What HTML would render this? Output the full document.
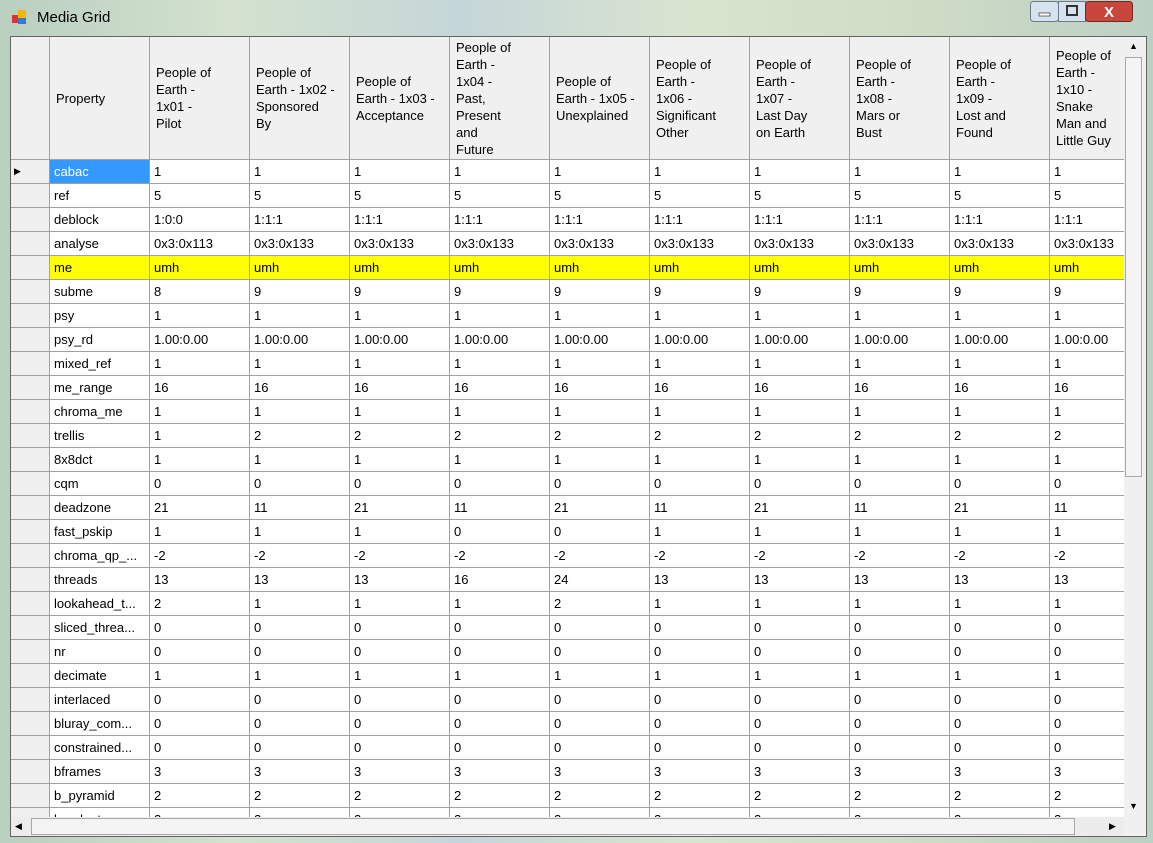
<!DOCTYPE html>
<html><head><style>
body{margin:0;width:1153px;height:843px;overflow:hidden;position:relative;font-family:"Liberation Sans",sans-serif;background:linear-gradient(90deg,#b9cfc0,#d4e2cf 20%,#c5d6d8 40%,#d9e4cf 60%,#cfdcc6 80%,#bcd0c4);}
.title{position:absolute;left:37px;top:9px;font-size:15px;color:#000;}
.icon{position:absolute;left:11px;top:9px;width:17px;height:17px;}
.btns{position:absolute;left:1030px;top:1px;width:115px;height:21px;}
.frame{position:absolute;left:10px;top:36px;width:1137px;height:801px;background:#f0f0f0;border:1px solid #646464;box-sizing:border-box;}
.wrap{position:absolute;left:11px;top:37px;width:1113px;height:780px;overflow:hidden;background:#fff;}
table{border-collapse:separate;border-spacing:0;table-layout:fixed;width:1212px;font-size:13px;}
td{border-right:1px solid #a0a0a0;border-bottom:1px solid #a0a0a0;height:24px;padding:0 0 0 4px;white-space:nowrap;overflow:hidden;box-sizing:border-box;color:#000;}
tr.h td{height:123px;background:#f0f0f0;line-height:17px;padding-left:6px;}
td.rh{background:#f0f0f0;padding:0;}
tr.y td{background:#ffff00;}
tr.y td.rh{background:#f0f0f0;}
td.sel{background:#3399ff;color:#fff;}
.vs{position:absolute;left:1124px;top:37px;width:20px;height:780px;background:#f0f0f0;}
.hs{position:absolute;left:11px;top:817px;width:1113px;height:19px;background:#ececec;}
.thumbv{position:absolute;left:1px;top:20px;width:17px;height:420px;background:#f4f4f4;border:1px solid #a8a8a8;box-sizing:border-box;}
.thumbh{position:absolute;left:20px;top:1px;width:1044px;height:17px;background:#f4f4f4;border:1px solid #a8a8a8;box-sizing:border-box;}
.arr{position:absolute;font-size:9px;color:#000;}
</style></head><body>
<svg class="icon" viewBox="0 0 17 17"><rect x="1" y="6" width="6" height="8" fill="#d33"/><rect x="7" y="1" width="8" height="8" fill="#f5b800"/><rect x="7" y="9" width="8" height="6" fill="#3a78d0"/></svg>
<div class="title">Media Grid</div>
<svg class="btns" viewBox="0 0 115 21"><rect x="0.5" y="0.5" width="28" height="20" rx="3" fill="#d6e2ee" stroke="#6b7b8c"/><rect x="9" y="12" width="11" height="3" fill="#fff" stroke="#333" stroke-width=".7"/><rect x="28.5" y="0.5" width="27" height="20" fill="#d6e2ee" stroke="#6b7b8c"/><rect x="37" y="5" width="10" height="9" fill="none" stroke="#333" stroke-width="2"/><rect x="55.5" y="0.5" width="47" height="20" rx="3" fill="#c9463d" stroke="#6b2a25"/><text x="79" y="16" font-size="15" font-weight="bold" fill="#fff" text-anchor="middle" font-family="Liberation Sans">X</text></svg>
<div class="frame"></div>
<div class="wrap"><table>
<colgroup><col style="width:39px"><col style="width:100px"><col style="width:100px"><col style="width:100px"><col style="width:100px"><col style="width:100px"><col style="width:100px"><col style="width:100px"><col style="width:100px"><col style="width:100px"><col style="width:100px"><col style="width:173px"></colgroup>
<tr class="h"><td class="rh"></td><td>Property</td><td>People of<br>Earth -<br>1x01 -<br>Pilot</td><td>People of<br>Earth - 1x02 -<br>Sponsored<br>By</td><td>People of<br>Earth - 1x03 -<br>Acceptance</td><td>People of<br>Earth -<br>1x04 -<br>Past,<br>Present<br>and<br>Future</td><td>People of<br>Earth - 1x05 -<br>Unexplained</td><td>People of<br>Earth -<br>1x06 -<br>Significant<br>Other</td><td>People of<br>Earth -<br>1x07 -<br>Last Day<br>on Earth</td><td>People of<br>Earth -<br>1x08 -<br>Mars or<br>Bust</td><td>People of<br>Earth -<br>1x09 -<br>Lost and<br>Found</td><td>People of<br>Earth -<br>1x10 -<br>Snake<br>Man and<br>Little Guy</td></tr>
<tr><td class="rh" style="font-size:9px;padding-left:3px">&#9654;</td><td class="sel">cabac</td><td>1</td><td>1</td><td>1</td><td>1</td><td>1</td><td>1</td><td>1</td><td>1</td><td>1</td><td>1</td></tr>
<tr><td class="rh"></td><td>ref</td><td>5</td><td>5</td><td>5</td><td>5</td><td>5</td><td>5</td><td>5</td><td>5</td><td>5</td><td>5</td></tr>
<tr><td class="rh"></td><td>deblock</td><td>1:0:0</td><td>1:1:1</td><td>1:1:1</td><td>1:1:1</td><td>1:1:1</td><td>1:1:1</td><td>1:1:1</td><td>1:1:1</td><td>1:1:1</td><td>1:1:1</td></tr>
<tr><td class="rh"></td><td>analyse</td><td>0x3:0x113</td><td>0x3:0x133</td><td>0x3:0x133</td><td>0x3:0x133</td><td>0x3:0x133</td><td>0x3:0x133</td><td>0x3:0x133</td><td>0x3:0x133</td><td>0x3:0x133</td><td>0x3:0x133</td></tr>
<tr class="y"><td class="rh"></td><td>me</td><td>umh</td><td>umh</td><td>umh</td><td>umh</td><td>umh</td><td>umh</td><td>umh</td><td>umh</td><td>umh</td><td>umh</td></tr>
<tr><td class="rh"></td><td>subme</td><td>8</td><td>9</td><td>9</td><td>9</td><td>9</td><td>9</td><td>9</td><td>9</td><td>9</td><td>9</td></tr>
<tr><td class="rh"></td><td>psy</td><td>1</td><td>1</td><td>1</td><td>1</td><td>1</td><td>1</td><td>1</td><td>1</td><td>1</td><td>1</td></tr>
<tr><td class="rh"></td><td>psy_rd</td><td>1.00:0.00</td><td>1.00:0.00</td><td>1.00:0.00</td><td>1.00:0.00</td><td>1.00:0.00</td><td>1.00:0.00</td><td>1.00:0.00</td><td>1.00:0.00</td><td>1.00:0.00</td><td>1.00:0.00</td></tr>
<tr><td class="rh"></td><td>mixed_ref</td><td>1</td><td>1</td><td>1</td><td>1</td><td>1</td><td>1</td><td>1</td><td>1</td><td>1</td><td>1</td></tr>
<tr><td class="rh"></td><td>me_range</td><td>16</td><td>16</td><td>16</td><td>16</td><td>16</td><td>16</td><td>16</td><td>16</td><td>16</td><td>16</td></tr>
<tr><td class="rh"></td><td>chroma_me</td><td>1</td><td>1</td><td>1</td><td>1</td><td>1</td><td>1</td><td>1</td><td>1</td><td>1</td><td>1</td></tr>
<tr><td class="rh"></td><td>trellis</td><td>1</td><td>2</td><td>2</td><td>2</td><td>2</td><td>2</td><td>2</td><td>2</td><td>2</td><td>2</td></tr>
<tr><td class="rh"></td><td>8x8dct</td><td>1</td><td>1</td><td>1</td><td>1</td><td>1</td><td>1</td><td>1</td><td>1</td><td>1</td><td>1</td></tr>
<tr><td class="rh"></td><td>cqm</td><td>0</td><td>0</td><td>0</td><td>0</td><td>0</td><td>0</td><td>0</td><td>0</td><td>0</td><td>0</td></tr>
<tr><td class="rh"></td><td>deadzone</td><td>21</td><td>11</td><td>21</td><td>11</td><td>21</td><td>11</td><td>21</td><td>11</td><td>21</td><td>11</td></tr>
<tr><td class="rh"></td><td>fast_pskip</td><td>1</td><td>1</td><td>1</td><td>0</td><td>0</td><td>1</td><td>1</td><td>1</td><td>1</td><td>1</td></tr>
<tr><td class="rh"></td><td>chroma_qp_...</td><td>-2</td><td>-2</td><td>-2</td><td>-2</td><td>-2</td><td>-2</td><td>-2</td><td>-2</td><td>-2</td><td>-2</td></tr>
<tr><td class="rh"></td><td>threads</td><td>13</td><td>13</td><td>13</td><td>16</td><td>24</td><td>13</td><td>13</td><td>13</td><td>13</td><td>13</td></tr>
<tr><td class="rh"></td><td>lookahead_t...</td><td>2</td><td>1</td><td>1</td><td>1</td><td>2</td><td>1</td><td>1</td><td>1</td><td>1</td><td>1</td></tr>
<tr><td class="rh"></td><td>sliced_threa...</td><td>0</td><td>0</td><td>0</td><td>0</td><td>0</td><td>0</td><td>0</td><td>0</td><td>0</td><td>0</td></tr>
<tr><td class="rh"></td><td>nr</td><td>0</td><td>0</td><td>0</td><td>0</td><td>0</td><td>0</td><td>0</td><td>0</td><td>0</td><td>0</td></tr>
<tr><td class="rh"></td><td>decimate</td><td>1</td><td>1</td><td>1</td><td>1</td><td>1</td><td>1</td><td>1</td><td>1</td><td>1</td><td>1</td></tr>
<tr><td class="rh"></td><td>interlaced</td><td>0</td><td>0</td><td>0</td><td>0</td><td>0</td><td>0</td><td>0</td><td>0</td><td>0</td><td>0</td></tr>
<tr><td class="rh"></td><td>bluray_com...</td><td>0</td><td>0</td><td>0</td><td>0</td><td>0</td><td>0</td><td>0</td><td>0</td><td>0</td><td>0</td></tr>
<tr><td class="rh"></td><td>constrained...</td><td>0</td><td>0</td><td>0</td><td>0</td><td>0</td><td>0</td><td>0</td><td>0</td><td>0</td><td>0</td></tr>
<tr><td class="rh"></td><td>bframes</td><td>3</td><td>3</td><td>3</td><td>3</td><td>3</td><td>3</td><td>3</td><td>3</td><td>3</td><td>3</td></tr>
<tr><td class="rh"></td><td>b_pyramid</td><td>2</td><td>2</td><td>2</td><td>2</td><td>2</td><td>2</td><td>2</td><td>2</td><td>2</td><td>2</td></tr>
<tr><td class="rh"></td><td>b_adapt</td><td>2</td><td>2</td><td>2</td><td>2</td><td>2</td><td>2</td><td>2</td><td>2</td><td>2</td><td>2</td></tr>
</table></div>
<div class="vs"><span class="arr" style="left:5px;top:4px">&#9650;</span><div class="thumbv"></div><span class="arr" style="left:5px;top:764px">&#9660;</span></div>
<div class="hs"><span class="arr" style="left:4px;top:4px">&#9664;</span><div class="thumbh"></div><span class="arr" style="left:1098px;top:4px">&#9654;</span></div>
</body></html>
